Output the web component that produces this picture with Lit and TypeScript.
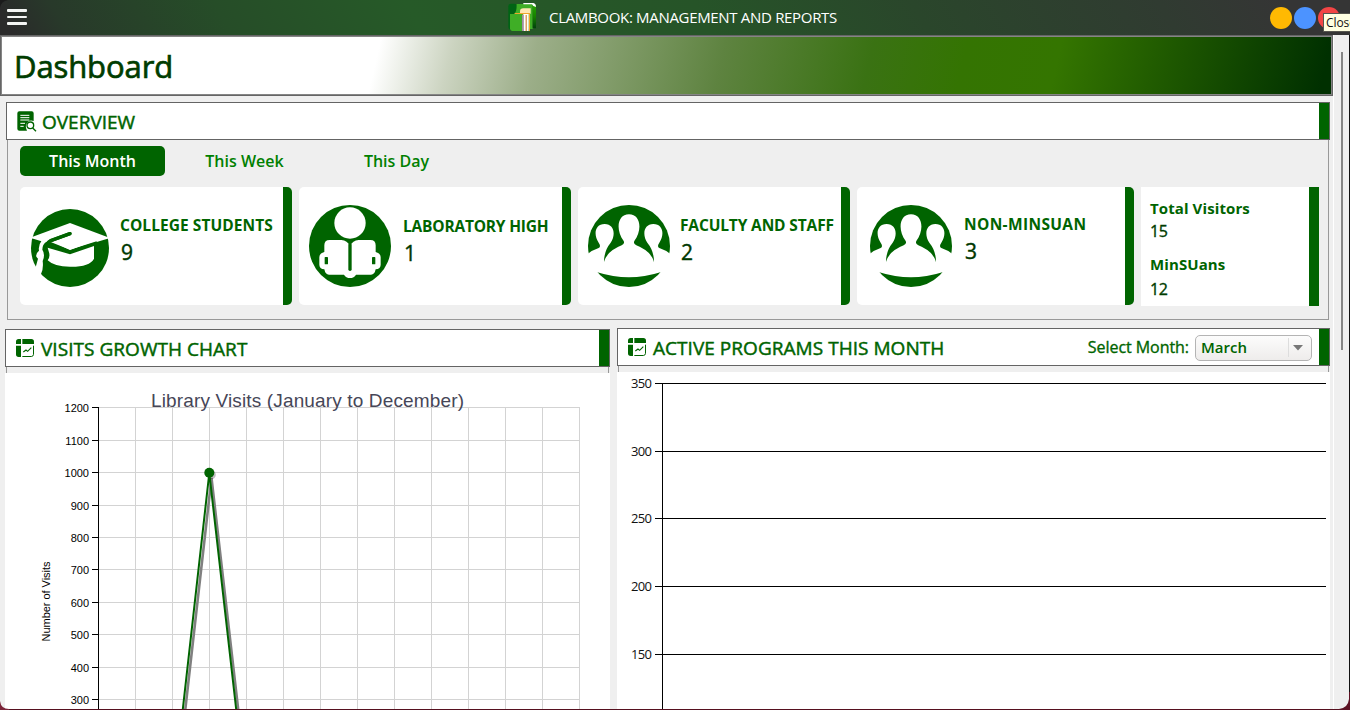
import { LitElement, html, svg, css } from "lit";
import { customElement, property } from "lit/decorators.js";

const capIcon = html`<svg class="ico" width="80" height="80" viewBox="90 84 240 240">
  <circle cx="210" cy="204" r="117" fill="#006400"/>
  <path fill="#fff" d="M90 173 210 129 330 174 210 210Z"/>
  <path fill="none" stroke="#006400" stroke-width="10" stroke-linecap="round" stroke-linejoin="round" d="M210 161 152 182Q138 188 134 204"/>
  <path fill="#006400" d="M140 190 L152 186 210 209 290 184 V196 L210 223 144 202Z"/>
  <path fill="#fff" d="M160 186 210 168 284 182 210 210Z"/>
  <path fill="none" stroke="#006400" stroke-width="10" stroke-linecap="round" d="M210 161 150 183"/>
  <path fill="#fff" d="M143 203 210 223 282 198V236Q268 261 210 260Q162 260 143 241Q152 229 146 214Z"/>
  <path fill="#fff" d="M126 180Q114 196 117 212Q107 220 109 230L114 236 107 262 100 268 118 290 123 282Q131 265 128 243Q132 236 132 226Q132 216 127 209Q127 192 142 182Z"/>
</svg>`;

const readerIcon = html`<svg class="ico" width="84" height="84" viewBox="54 72 252 252">
  <circle cx="180" cy="198" r="123" fill="#006400"/>
  <circle cx="180" cy="129" r="47" fill="#fff"/>
  <path fill="#fff" d="M103 216V196Q103 180 119 180H154Q172 181 180 198Q188 181 206 180H241Q257 180 257 196V216Q272 220 272 232V254Q272 266 257 268Q254 284 243 284H198Q192 294 180 294Q168 294 162 284H117Q106 284 103 268Q88 266 88 254V232Q88 220 103 216Z"/>
  <path fill="none" stroke="#006400" stroke-width="10" stroke-linecap="round" d="M180 194V268"/>
  <rect x="104" y="231" width="10" height="22" rx="2" fill="#006400"/>
  <rect x="246" y="231" width="10" height="22" rx="2" fill="#006400"/>
</svg>`;

const groupIcon = html`<svg class="ico" width="84" height="84" viewBox="51 72 252 252">
  <circle cx="177" cy="198" r="123" fill="#006400"/>
  <path fill="#fff" d="M48 226Q62 212 86 204Q94 200 86 188C70 165 74 132 104 132C133 132 138 165 122 188Q102 212 102 246Q110 214 155 196Q165 192 161 183C136 150 142 103 177 103C212 103 218 150 193 183Q189 192 199 196Q244 214 252 246Q252 212 232 188C216 165 221 132 250 132C280 132 284 165 268 188Q260 200 268 204Q292 212 306 226L306 277H271Q177 307 82 277H48Z"/>
</svg>`;

const reportIcon = html`<svg class="ico" width="20" height="21" viewBox="0 0 60 63">
  <path fill="#006400" d="M7 1H44Q50 1 50 7V30Q40 26 32 33Q22 44 30 59H7Q1 59 1 53V7Q1 1 7 1Z"/>
  <path stroke="#fff" stroke-width="3" d="M10 13H37M10 20H37M10 27H37M10 37H24M10 46H20"/>
  <circle cx="40" cy="43" r="10" fill="#fff" stroke="#006400" stroke-width="4"/>
  <path stroke="#006400" stroke-width="4" d="M47 51 57 61"/>
</svg>`;

const chartIcon = html`<svg class="ico" width="18" height="18" viewBox="0 0 54 54">
  <path fill="#006400" d="M0 15V8Q0 0 8 0H15V15ZM19 0H46Q54 0 54 8V15H19ZM0 20H15V54H8Q0 54 0 46Z"/>
  <path fill="none" stroke="#006400" stroke-width="3" d="M52.500 20V46Q52 52.500 46 52.500H19"/>
  <path fill="none" stroke="#006400" stroke-width="3.500" d="M22 39 30 33 35 37 46 26"/>
</svg>`;

const logo = html`<svg class="logo" width="28" height="28" viewBox="0 0 84 84">
  <defs><linearGradient id="edge" x1="0" y1="0" x2="0" y2="1"><stop offset="0" stop-color="#25a300"/><stop offset=".5" stop-color="#168000"/><stop offset="1" stop-color="#00410c"/></linearGradient></defs>
  <rect x="1" y="2" width="26" height="78" rx="8" fill="#006414"/>
  <path fill="#3fae26" d="M26 3H74V78H20V30Q26 28 26 3Z"/>
  <path fill="url(#edge)" d="M74 6H84V76Q80 76 74 74Z"/>
  <path fill="#fff" d="M46 0H76Q84 2 84 12L76 9 72 4H46Z"/>
  <path fill="#ffe7b2" d="M36 26Q36 16 46 16H68V32H36Z"/>
  <path fill="#f0a62c" d="M20 30H66V84H62V34H20Z"/>
  <path fill="#3fae26" d="M6 33H42V84H12Q6 84 6 76Z"/>
  <path fill="#fff" d="M46 33H62V84H46Z"/>
  <path fill="#a68aa8" d="M42 36H47V84H42Z"/><path fill="#c7751d" d="M53 36H56V84H53Z"/>
</svg>`;

@customElement("stat-card")
class StatCard extends LitElement {
  @property() label = "";
  @property() value = "";
  @property({ attribute: false }) icon: unknown;
  static styles = css`
    :host { display: flex; height: 118px; box-sizing: border-box; background: #fff; border-radius: 5px; border-right: 9px solid #006400; white-space: nowrap; font-family: "Open Sans", "Noto Sans", sans-serif; }
    .ico { flex: none; display: block; }
    .copy { display: flex; flex-direction: column; padding-top: var(--drop, 10px); }
    .label { font-size: 15.5px; font-weight: 700; color: #006400; line-height: 20px; letter-spacing: var(--track, 0.06px); }
    .value { font-size: 21px; -webkit-text-stroke: 0.4px #003800; color: #003800; line-height: 30px; margin: 2px 0 0 1px; }
  `;
  render() {
    return html`${this.icon}<div class="copy"><span class="label">${this.label}</span><span class="value">${this.value}</span></div>`;
  }
}

const gridX = Array.from({ length: 14 }, (_, i) => Math.round(98 + i * 37.03) + 0.5);
const visits = [1200, 1100, 1000, 900, 800, 700, 600, 500, 400, 300];
const visitY = (i: number) => Math.round(407.2 + i * 32.45) + 0.5;
const programs = [350, 300, 250, 200, 150];

@customElement("app-root")
class AppRoot extends LitElement {
  static styles = css`
    :host { display: block; height: 710px; box-sizing: border-box; background: #efefef; overflow: hidden; position: relative; font-family: "Open Sans", "Noto Sans", sans-serif; white-space: nowrap; }
    .titlebar { height: 35px; display: flex; align-items: center; background: linear-gradient(60deg, #2a2a2a 1%, #28392a 5%, #264d28 17%, #265a28 31%, #265428 52%, #2a462b 68%, #303b31 86%, #353535 95%); }
    .menu { margin-left: 7px; width: 20px; display: grid; gap: 4px; margin-top: -1px; }
    .menu i { height: 2.4px; background: #f3f5f3; border-radius: 1px; }
    .brand { display: flex; align-items: center; margin-left: 481px; gap: 13px; margin-top: -1px; }
    .logo { display: block; }
    .brand span { color: #fff; font-size: 15px; letter-spacing: -0.32px; line-height: 20px; margin-top: 0; }
    .dots { display: flex; gap: 2px; margin-left: auto; margin-right: 10px; margin-top: 1px; }
    .dot { width: 22px; height: 22px; border-radius: 50%; }
    .amber { background: #ffb902; } .blue { background: #4c93ff; } .red { background: #f24545; }
    .tip { position: absolute; left: 1323px; top: 13px; width: 40px; height: 19px; box-sizing: border-box; border: 1px solid #55554e; background: #ffffe1; font-size: 12px; line-height: 18px; padding-left: 2px; color: #111; letter-spacing: -0.1px; }
    .body { display: flex; height: 674px; }
    .main { width: 1333px; height: 674px; overflow: hidden; }
    .banner { height: 61px; width: 1333px; box-sizing: border-box; border: 1px solid #656565; box-shadow: inset 0 0 0 1px #858585; background: linear-gradient(103deg, #fff 28.300%, #ccd4c1 33.700%, #9cae89 40%, #5e8340 54%, #3a7213 65%, #347402 72%, #347500 79%, #003000 99%); padding-left: 13px; color: #003c00; font-size: 31px; line-height: 60px; }
    .banner span { letter-spacing: -0.1px; -webkit-text-stroke: 0.7px #003c00; }
    .group { margin: 6px 0 0 6px; width: 1324px; }
    .head { height: 38px; box-sizing: border-box; border: 1px solid #646464; background: #fff; display: flex; align-items: center; color: #006400; font-size: 19px; padding-left: 10px; }
    .h-over { gap: 5px; }
    .h-chart .title { margin-left: 7px; letter-spacing: 0.04px; }
    .head .end { align-self: stretch; width: 10px; background: #006400; margin-left: auto; }
    .head .ico { flex: none; }
    .head .title { line-height: 24px; margin-top: 2px; -webkit-text-stroke: 0.45px #006400; }
    .overview-body { margin-left: 1px; width: 1322px; height: 180px; box-sizing: border-box; border: 1px solid #999; border-top: 0; padding: 6px 0 0 12px; }
    .tabs { display: flex; height: 30px; align-items: center; color: #008000; font-size: 16px; font-weight: 600; }
    .tab { width: 145px; text-align: center; line-height: 30px; letter-spacing: 0; }
    .tab.on { background: #006400; color: #fff; border-radius: 5px; }
    .tab + .tab { margin-left: 7px; }
    .cards { display: grid; grid-template-columns: 272px 272px 272px 277px 178px; gap: 7px; margin-top: 11px; align-items: start; }
    .c1 { padding: 21px 0 0 10px; gap: 10px; --drop: 7px; }
    .c2 { padding: 17px 0 0 9px; gap: 11px; --drop: 12px; --track: -0.2px; }
    .c3 { padding: 17px 0 0 9px; gap: 9px; --drop: 11px; --track: -0.14px; }
    .c4 { padding: 17px 0 0 12px; gap: 11px; --drop: 10px; --track: 0.36px; }
    .totals { height: 119px; box-sizing: border-box; border-right: 10px solid #006400; background: #fff; padding: 11px 0 0 9px; font-size: 15px; line-height: 21px; color: #006400; display: flex; flex-direction: column; }
    .totals b { font-weight: 700; letter-spacing: 0.1px; }
    .totals span { font-size: 16px; -webkit-text-stroke: 0.35px #003c00; color: #003c00; line-height: 24px; letter-spacing: -0.4px; }
    .totals b + span + b { margin-top: 11px; }
    .totals b + span + b + span { margin-top: 2px; }
    .charts { display: flex; gap: 7px; margin-left: 5px; align-items: flex-start; }
    .visits { width: 605px; margin-top: 9px; }
    .programs { width: 713px; margin-top: 8px; }
    .spacer { height: 6px; margin: 0 1px; border: solid #999; border-width: 0 1px; }
    .plot { display: block; background: #fff; }
    .select-label { margin-left: auto; font-size: 16px; letter-spacing: -0.05px; margin-right: 6px; -webkit-text-stroke: 0.35px #006400; }
    .combo { width: 117px; height: 26px; margin-top: 1px; box-sizing: border-box; border: 1px solid #b4b4b4; border-radius: 5px; background: linear-gradient(#fcfcfc, #eeeceb); display: flex; align-items: center; font-size: 15px; font-weight: 600; padding-left: 5px; margin-right: 7px; }
    .combo span { margin-top: -2px; }
    .combo i { margin-left: auto; width: 23px; height: 19px; border-left: 1px solid #ddd; display: flex; align-items: center; padding-left: 4px; box-sizing: border-box; }
    .programs .end { margin-left: 0; }
    .rail { flex: 1; border-left: 1px solid #fff; border-right: 1px solid #111; box-sizing: border-box; display: flex; justify-content: center; padding-top: 17px; }
    .thumb { width: 2px; height: 298px; background: #858585; margin-left: 1px; }
    .floor { height: 1px; background: #56101f; }
    .arial { font-family: "Liberation Sans", Arial, sans-serif; }
    .corner { position: absolute; right: 0; bottom: 0; }
    .corner-left { position: absolute; left: 0; bottom: 0; }
    .corner-top { position: absolute; left: 0; top: 0; }
  `;

  visitsChart() {
    return html`<svg class="plot" width="605" height="336" viewBox="5 373 605 336">
      <g stroke="#d3d3d3" shape-rendering="crispEdges">
        ${gridX.slice(1).map((x) => svg`<line x1=${x} x2=${x} y1="407" y2="710"/>`)}
        ${visits.map((_, i) => svg`<line x1="99" x2="580" y1=${visitY(i)} y2=${visitY(i)}/>`)}
      </g>
      <g class="arial" font-size="11" text-anchor="end" fill="#000">
        ${visits.map((v, i) => svg`<line x1="92" x2="99" y1=${visitY(i)} y2=${visitY(i)} stroke="#000" shape-rendering="crispEdges"/><text x="89" y=${visitY(i) + 4}>${v}</text>`)}
      </g>
      <path d="M98.500 407V710" stroke="#000" shape-rendering="crispEdges"/>
      <text class="arial" x="151" y="407" font-size="19" fill="#464657" textLength="313">Library Visits (January to December)</text>
      <text class="arial" font-size="11" text-anchor="middle" textLength="80" transform="translate(50 601.500) rotate(-90)">Number of Visits</text>
      <path d="M185 712 211.500 478 238.500 712" fill="none" stroke="#808080" stroke-width="2.600"/>
      <circle cx="211.300" cy="474.700" r="4.500" fill="#000" opacity=".25"/>
      <path d="M182.500 712 209.300 473 236.500 712" fill="none" stroke="#006400" stroke-width="2"/>
      <circle cx="209.300" cy="472.700" r="5" fill="#006400"/>
    </svg>`;
  }

  programsChart() {
    return html`<svg class="plot" width="713" height="337" viewBox="617 372 713 337">
      <g font-size="13" text-anchor="end" fill="#111">
        ${programs.map((v, i) => { const y = Math.round(383 + i * 67.7) + 0.5; return svg`<line x1="655" x2="1326" y1=${y} y2=${y} stroke="#000" shape-rendering="crispEdges"/><text x="652" y=${y + 4} textLength="21">${v}</text>`; })}
      </g>
      <path d="M662.500 383V710" stroke="#000" shape-rendering="crispEdges"/>
    </svg>`;
  }

  render() {
    return html`
      <div class="titlebar">
        <div class="menu"><i></i><i></i><i></i></div>
        <div class="brand">${logo}<span>CLAMBOOK: MANAGEMENT AND REPORTS</span></div>
        <div class="dots"><div class="dot amber"></div><div class="dot blue"></div><div class="dot red"></div></div>
      </div>
      <div class="tip">Close</div>
      <div class="body">
        <div class="main">
          <div class="banner"><span>Dashboard</span></div>
          <div class="group">
            <div class="head h-over">${reportIcon}<span class="title">OVERVIEW</span><div class="end"></div></div>
            <div class="overview-body">
              <div class="tabs"><div class="tab on">This Month</div><div class="tab">This Week</div><div class="tab">This Day</div></div>
              <div class="cards">
                <stat-card class="c1" .icon=${capIcon} label="COLLEGE STUDENTS" value="9"></stat-card>
                <stat-card class="c2" .icon=${readerIcon} label="LABORATORY HIGH" value="1"></stat-card>
                <stat-card class="c3" .icon=${groupIcon} label="FACULTY AND STAFF" value="2"></stat-card>
                <stat-card class="c4" .icon=${groupIcon} label="NON-MINSUAN" value="3"></stat-card>
                <div class="totals"><b>Total Visitors</b><span>15</span><b>MinSUans</b><span>12</span></div>
              </div>
            </div>
          </div>
          <div class="charts">
            <div class="visits">
              <div class="head h-chart">${chartIcon}<span class="title">VISITS GROWTH CHART</span><div class="end"></div></div>
              <div class="spacer"></div>
              ${this.visitsChart()}
            </div>
            <div class="programs">
              <div class="head h-chart">${chartIcon}<span class="title">ACTIVE PROGRAMS THIS MONTH</span>
                <span class="select-label">Select Month:</span>
                <div class="combo"><span>March</span><i><svg width="10" height="6"><path d="M0 0H10L5 5.500Z" fill="#777"/></svg></i></div>
                <div class="end"></div></div>
              <div class="spacer"></div>
              ${this.programsChart()}
            </div>
          </div>
        </div>
        <div class="rail"><div class="thumb"></div></div>
      </div>
      <div class="floor"></div>
      <svg class="corner" width="12" height="18"><path d="M12 0H11V7Q10 16 1 17V18H12Z" fill="#5c1123"/></svg>
      <svg class="corner-left" width="9" height="9"><path d="M0 0Q1 8 9 8V9H0Z" fill="#7a2438"/></svg>
      <svg class="corner-top" width="8" height="8"><path d="M0 0H8Q1 1 0 8Z" fill="#1b1b1b"/></svg>
    `;
  }
}
